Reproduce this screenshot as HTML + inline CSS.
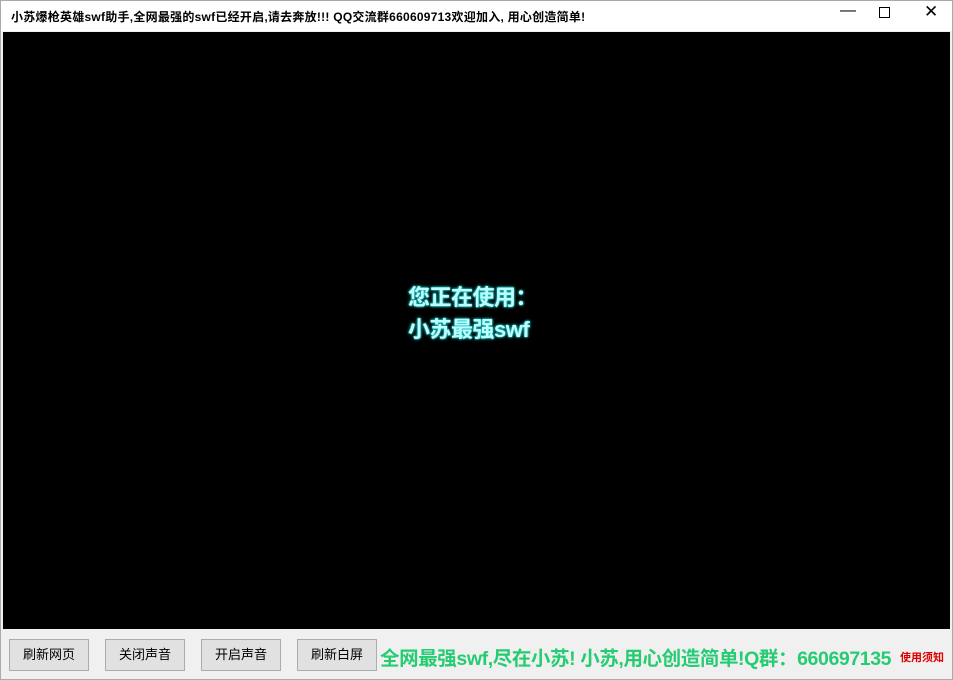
<!DOCTYPE html>
<html><head><meta charset="utf-8"><style>
*{margin:0;padding:0;box-sizing:border-box}
body{width:953px;height:680px;background:#f0f0f0;position:relative;overflow:hidden;font-family:"Liberation Sans","Microsoft YaHei","Noto Sans CJK SC",sans-serif}
.title{position:absolute;left:0;top:0;width:953px;height:31px;background:#fff;border:1px solid #999;border-bottom:none}
.title span{position:absolute;left:10px;top:7px;font-size:12px;font-weight:bold;color:#000;letter-spacing:0.25px}
.ctl{position:absolute;top:4px;font-size:14px;color:#000}
.screen{position:absolute;left:3px;top:32px;width:947px;height:597px;background:#000}
.msg{position:absolute;left:408px;top:282px;font-size:22px;line-height:32px;color:#bff;font-weight:bold;text-shadow:0 0 2px #2cc,0 0 3px #2bb,0 0 1px #0aa;letter-spacing:-0.5px}
.btn{position:absolute;top:639px;width:80px;height:32px;background:#e1e1e1;border:1px solid #adadad;font-size:13px;text-align:center;line-height:30px;color:#000}
.green{position:absolute;left:380px;top:642px;font-size:19.5px;font-weight:bold;color:#25cc72;white-space:nowrap;letter-spacing:-0.4px}
.red{position:absolute;left:900px;top:649px;font-size:11px;font-weight:bold;color:#d00}
.frame{position:absolute;left:0;top:0;width:953px;height:680px;border:1px solid #aaa;pointer-events:none}
</style></head><body>
<div class="title"><span>小苏爆枪英雄swf助手,全网最强的swf已经开启,请去奔放!!! QQ交流群660609713欢迎加入, 用心创造简单!</span>
<div class="ctl" style="left:839px;top:1px;font-size:16px">—</div>
<div style="position:absolute;left:878px;top:6px;width:11px;height:11px;border:1px solid #000"></div>
<div class="ctl" style="left:923px;top:1px;font-size:17px">✕</div>
</div>
<div class="screen"></div>
<div class="msg">您正在使用：<br>小苏最强swf</div>
<div class="btn" style="left:9px">刷新网页</div>
<div class="btn" style="left:105px">关闭声音</div>
<div class="btn" style="left:201px">开启声音</div>
<div class="btn" style="left:297px">刷新白屏</div>
<div class="green">全网最强swf,尽在小苏! 小苏,用心创造简单!Q群：660697135</div>
<div class="red">使用须知</div>
<div class="frame"></div>
</body></html>
